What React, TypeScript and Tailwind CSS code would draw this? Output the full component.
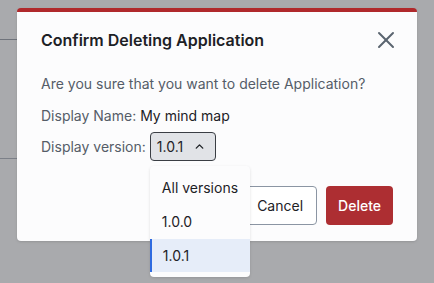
import { X, ChevronUp } from "lucide-react";

const versions = ["All versions", "1.0.0", "1.0.1"];

export default function App() {
  const selected = "1.0.1";
  return (
    <div className="relative h-[283px] w-[434px] overflow-hidden bg-[#a9aaad] font-['Inter',sans-serif]">
      {/* page behind the overlay */}
      <div className="flex flex-col pt-[39px]">
        <div className="h-px w-[40px] bg-[#6f737b]" />
        <div className="mt-[118px] h-px w-[40px] bg-[#7c8088]" />
      </div>

      {/* modal */}
      <div className="absolute left-[17px] top-[8px] w-[400px] rounded-[4px] border-t-4 border-[#b0292c] bg-[#fcfcfd] px-6 pb-4 pt-4 shadow-sm">
        <div className="flex items-center justify-between">
          <h2 className="text-[16px] leading-6 font-semibold text-[#1d2126]">
            Confirm Deleting Application
          </h2>
          <button className="-mr-[5px] flex h-6 w-6 items-center justify-center text-[#5b6570]">
            <X size={28} strokeWidth={1.7} className="shrink-0" />
          </button>
        </div>

        <p className="mt-[22px] text-[14px] leading-5 text-[#555d68]">
          Are you sure that you want to delete Application?
        </p>
        <p className="mt-3 text-[14px] leading-5 text-[#555d68]">
          Display Name: <span className="text-[#1d2126]">My mind map</span>
        </p>

        <div className="mt-[6px] flex items-center gap-1 text-[14px] leading-5 text-[#555d68]">
          <span>Display version:</span>
          <div className="relative">
            <button className="flex h-[29px] items-center gap-[10px] rounded-[4px] border border-[#3a3e44] bg-[#e1e3e7] pl-[6px] pr-[9px] text-[#1d2126]">
              <span>{selected}</span>
              <ChevronUp size={13} strokeWidth={2.5} />
            </button>
            <ul className="absolute left-0 top-[34px] z-10 w-[100px] rounded-[4px] bg-[#fcfcfd] py-[5px] shadow-[0_1px_3px_rgba(0,0,0,0.12)]">
              {versions.map((v) => (
                <li
                  key={v}
                  className={
                    v === selected
                      ? "flex h-[33px] items-center border-l-2 border-[#2f6be0] bg-[#e6edf9] pl-[11px] text-[#1d2126]"
                      : "flex h-[34px] items-center pl-3 text-[#1d2126]"
                  }
                >
                  {v}
                </li>
              ))}
            </ul>
          </div>
        </div>

        <div className="mt-[25px] flex justify-end gap-[9px]">
          <button className="h-[39px] rounded-[4px] border border-[#8b95a3] bg-white px-[13px] text-[14px] text-[#1d2126]">
            Cancel
          </button>
          <button className="h-[39px] rounded-[4px] bg-[#ad2e32] px-3 text-[14px] font-medium text-white">
            Delete
          </button>
        </div>
      </div>
    </div>
  );
}
